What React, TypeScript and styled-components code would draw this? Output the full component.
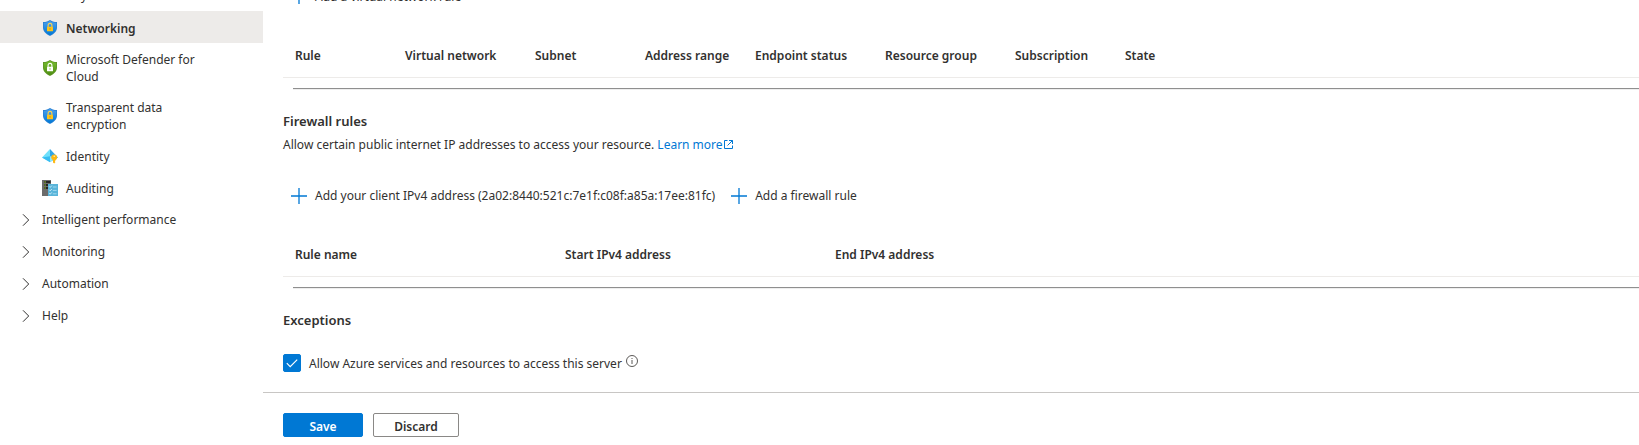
import React from 'react';
import styled, { createGlobalStyle } from 'styled-components';

const GlobalStyle = createGlobalStyle`
  *, *::before, *::after { box-sizing: border-box; }
  body {
    margin: 0;
    background: #fff;
    color: #323130;
    font-family: 'Segoe UI', 'Noto Sans', 'Open Sans', sans-serif;
    font-size: 12px;
    line-height: 17px;
    overflow: hidden;
  }
`;

/* ---------- layout ---------- */

const Page = styled.div`
  display: grid;
  grid-template-columns: 263px minmax(0, 1fr);
  min-height: 100vh;
  overflow: hidden;
`;

/* Both panes are scrolled down, so their first row is partly out of view. */
const Sidebar = styled.nav`
  margin-top: -21px;
`;

const Content = styled.div`
  margin-top: -21px;
`;

const Sections = styled.main`
  padding-left: 20px;
`;

/* ---------- sidebar ---------- */

const NavList = styled.ul`
  list-style: none;
  margin: 0;
  padding: 0;
`;

const NavLink = styled.a<{ $active?: boolean }>`
  display: flex;
  align-items: center;
  gap: 8px;
  min-height: 32px;
  padding: 8px 48px 6px 42px;
  color: inherit;
  text-decoration: none;
  font-weight: ${p => (p.$active ? 600 : 400)};
  background: ${p => (p.$active ? '#edebe9' : 'transparent')};

  svg { flex: none; }
`;

const GroupButton = styled.button`
  display: flex;
  align-items: center;
  gap: 10px;
  width: 100%;
  height: 32px;
  padding: 1px 20px 0;
  border: 0;
  background: none;
  color: inherit;
  font: inherit;
  text-align: left;
`;

/* ---------- sections ---------- */

const CommandBar = styled.div`
  display: flex;
  gap: 16px;
  height: 34px;
  padding-left: 8px;
`;

const Command = styled.button`
  display: flex;
  align-items: center;
  gap: 8px;
  padding: 0;
  border: 0;
  background: none;
  color: inherit;
  font: inherit;
  white-space: nowrap;
`;

const RulesTable = styled.table`
  width: 100%;
  margin-top: 23px;
  table-layout: fixed;
  border-collapse: collapse;
  border-bottom: 1px solid #edebe9;
`;

const HeaderCell = styled.th`
  height: 41px;
  padding: 0 0 2px 12px;
  text-align: left;
  font-weight: 600;
  white-space: nowrap;
`;

const Divider = styled.hr`
  height: 2px;
  margin: 10px 0 0 10px;
  border: solid #eeeeee;
  border-width: 1px 0;
  border-top-color: #8f8f8f;
`;

const Heading = styled.h2`
  margin: 21px 0 0;
  font-size: 13px;
  font-weight: 600;
  line-height: 20px;
`;

const Description = styled.p`
  margin: 4px 0 24px;
  line-height: 20px;
`;

const LearnMore = styled.a`
  color: #0078d4;
  text-decoration: none;

  svg { vertical-align: -1px; }
`;

const Option = styled.div`
  display: flex;
  align-items: center;
  margin-top: 23px;
`;

const OptionLabel = styled.label`
  display: flex;
  align-items: center;
  gap: 8px;
  height: 20px;
`;

const CheckBoxFrame = styled.span`
  display: grid;
  width: 18px;
  height: 18px;

  > * { grid-area: 1 / 1; }
  svg { pointer-events: none; }
`;

const CheckBox = styled.input`
  appearance: none;
  width: 18px;
  height: 18px;
  margin: 0;
  border: 1px solid #605e5c;
  border-radius: 2px;

  &:checked {
    border-color: #0078d4;
    background: #0078d4;
  }
`;

const InfoButton = styled.button`
  display: flex;
  margin: 0 0 4px 4px;
  padding: 0;
  border: 0;
  background: none;
`;

/* ---------- footer ---------- */

const Footer = styled.footer`
  display: flex;
  gap: 10px;
  margin-top: 19px;
  padding: 20px;
  border-top: 1px solid #c8c6c4;
`;

const Action = styled.button<{ $primary?: boolean }>`
  height: 24px;
  min-width: ${p => (p.$primary ? 80 : 86)}px;
  padding: 2px 16px 0;
  border: 1px solid ${p => (p.$primary ? '#0078d4' : '#8a8886')};
  border-radius: 2px;
  background: ${p => (p.$primary ? '#0078d4' : '#fff')};
  color: ${p => (p.$primary ? '#fff' : '#323130')};
  font: inherit;
  font-weight: 600;
`;

/* ---------- icons ---------- */

const SHIELD = 'M9 1C7.4 2.3 5 3 2 3.1V8.4C2 12.4 5.2 15 9 17C12.8 15 16 12.4 16 8.4V3.1C13 3 10.6 2.3 9 1Z';

function ShieldIcon({ id, tone }: { id: string; tone: 'blue' | 'green' }) {
  const blue = tone === 'blue';
  return (
    <svg width="16" height="16" viewBox="1 1 16 16" aria-hidden="true">
      <defs>
        <linearGradient id={id} x1="0" y1="0" x2="0" y2="1">
          <stop offset="0" stopColor={blue ? '#4aa0f0' : '#76bc2d'} />
          <stop offset="1" stopColor={blue ? '#0078d4' : '#4f8d15'} />
        </linearGradient>
      </defs>
      <path d={SHIELD} fill={blue ? '#2b82d4' : '#5e9624'} />
      <path d="M9 2C7.4 3.2 5.3 3.8 2.8 4V8.4C2.8 11.9 5.6 14.3 9 16.1C12.4 14.3 15.2 11.9 15.2 8.4V4C12.7 3.8 10.6 3.2 9 2Z" fill={`url(#${id})`} />
      <path d="M7.1 8.5V6.4A1.9 2 0 0 1 10.9 6.4V8.5" fill="none" stroke={blue ? '#ffd34d' : '#fff'} strokeWidth="1.1" />
      <rect x="6" y="7.8" width="6" height="4.4" rx=".5" fill={blue ? '#fcc41c' : '#fff'} />
      <circle cx="9" cy="9.9" r=".7" fill={blue ? '#c98a00' : '#76bc2d'} />
    </svg>
  );
}

function IdentityIcon() {
  return (
    <svg width="16" height="16" viewBox="0 0 16 16" aria-hidden="true">
      <path d="M8 1L0 9.5L8 14Z" fill="#6fe0fb" />
      <path d="M8 1L16 9.5L8 14Z" fill="#2fa5e8" />
      <path d="M0 9.5L8 8.2V14.2Z" fill="#38bdf2" />
      <path d="M8 8.2L15 9.5L8 14.2Z" fill="#8fe6fb" />
      <circle cx="12.2" cy="9.3" r="2.9" fill="#fdb813" />
      <path d="M11 11H13.4V13L12.8 13.6L13.4 14.3L12.2 15.6L11 14.6Z" fill="#fdb813" />
      <circle cx="12.2" cy="8.3" r=".7" fill="#fff3c4" />
    </svg>
  );
}

function AuditIcon() {
  return (
    <svg width="16" height="16" viewBox="0 0 16 16" aria-hidden="true">
      <path d="M0 0H9V16H0Z" fill="#6b6b6b" />
      <path d="M2 1H8.5V3H2ZM2 4H8.5V6H2ZM2 7H7V9H2Z" fill="#262626" />
      <path d="M2.4 1.5H3.8V2.6H2.4ZM2.4 4.5H3.8V5.6H2.4ZM2.4 7.5H3.8V8.6H2.4Z" fill="#b4ec36" />
      <path d="M6 4H16V16H6Z" fill="#59b4d9" />
      <path d="M7.2 6.4L8.2 7.4L9.8 5.6M7.2 9.8L8.2 10.8L9.8 9M7.2 13.2L8.2 14.2L9.8 12.4" fill="none" stroke="#d8f1fb" strokeWidth=".9" />
      <path d="M10.8 7H14.6M10.8 10.4H14.6M10.8 13.8H14.6" stroke="#a9dcf0" strokeWidth=".9" />
    </svg>
  );
}

function Chevron({ open }: { open?: boolean }) {
  return (
    <svg width="12" height="12" viewBox="0 0 12 12" aria-hidden="true">
      <path d={open ? 'M.5 3L6 8.5L11.5 3' : 'M3 .3L8.7 6L3 11.7'} fill="none" stroke="#323130" strokeWidth="1" />
    </svg>
  );
}

function PlusIcon() {
  return (
    <svg width="16" height="16" viewBox="0 0 16 16" aria-hidden="true">
      <path d="M8 0V16M0 8H16" stroke="#0078d4" strokeWidth="1.3" />
    </svg>
  );
}

function ExternalIcon() {
  return (
    <svg width="11" height="11" viewBox="0 0 11 11" aria-hidden="true">
      <path d="M4.5 1.5H1.5V9.5H9.5V6.5M6 1.5H9.5V5M9.5 1.5L4.5 6.5" fill="none" stroke="#0078d4" />
    </svg>
  );
}

function CheckIcon() {
  return (
    <svg width="18" height="18" viewBox="0 0 18 18" aria-hidden="true">
      <path d="M3.8 9.2L7.2 12.6L14.2 5.6" fill="none" stroke="#fff" strokeWidth="1.2" />
    </svg>
  );
}

function InfoIcon() {
  return (
    <svg width="12" height="12" viewBox="0 0 12 12" aria-hidden="true">
      <circle cx="6" cy="6" r="5.5" fill="none" stroke="#484644" strokeWidth=".9" />
      <path d="M6 5V9M6 3V4" stroke="#484644" strokeWidth=".9" />
    </svg>
  );
}

/* ---------- parts ---------- */

const vnetColumns: [string, number?][] = [
  ['Rule', 110],
  ['Virtual network', 130],
  ['Subnet', 110],
  ['Address range', 110],
  ['Endpoint status', 130],
  ['Resource group', 130],
  ['Subscription', 110],
  ['State'],
];

const firewallColumns: [string, number?][] = [
  ['Rule name', 270],
  ['Start IPv4 address', 270],
  ['End IPv4 address'],
];

function Rules({ label, columns }: { label: string; columns: [string, number?][] }) {
  return (
    <>
      <RulesTable aria-label={label}>
        <colgroup>
          {columns.map(([name, width]) => (
            <col key={name} width={width} />
          ))}
        </colgroup>
        <thead>
          <tr>
            {columns.map(([name]) => (
              <HeaderCell key={name} scope="col">{name}</HeaderCell>
            ))}
          </tr>
        </thead>
      </RulesTable>
      <Divider />
    </>
  );
}

const securityItems = [
  { label: 'Networking', icon: <ShieldIcon id="networking" tone="blue" />, active: true },
  { label: 'Microsoft Defender for Cloud', icon: <ShieldIcon id="defender" tone="green" /> },
  { label: 'Transparent data encryption', icon: <ShieldIcon id="encryption" tone="blue" /> },
  { label: 'Identity', icon: <IdentityIcon /> },
  { label: 'Auditing', icon: <AuditIcon /> },
];

const groups = ['Intelligent performance', 'Monitoring', 'Automation', 'Help'];

export default function App() {
  return (
    <>
      <GlobalStyle />
      <Page>
        <Sidebar aria-label="Resource menu">
          <GroupButton type="button" aria-expanded="true">
            <Chevron open />
            Security
          </GroupButton>
          <NavList>
            {securityItems.map(item => (
              <li key={item.label}>
                <NavLink href="#" $active={item.active} aria-current={item.active ? 'page' : undefined}>
                  {item.icon}
                  {item.label}
                </NavLink>
              </li>
            ))}
          </NavList>
          {groups.map(group => (
            <GroupButton key={group} type="button" aria-expanded="false">
              <Chevron />
              {group}
            </GroupButton>
          ))}
        </Sidebar>

        <Content>
          <Sections>
            <CommandBar>
              <Command type="button">
                <PlusIcon />
                Add a virtual network rule
              </Command>
            </CommandBar>
            <Rules label="Virtual network rules" columns={vnetColumns} />

            <Heading>Firewall rules</Heading>
            <Description>
              Allow certain public internet IP addresses to access your resource.{' '}
              <LearnMore href="#">Learn more<ExternalIcon /></LearnMore>
            </Description>
            <CommandBar>
              <Command type="button">
                <PlusIcon />
                Add your client IPv4 address (2a02:8440:521c:7e1f:c08f:a85a:17ee:81fc)
              </Command>
              <Command type="button">
                <PlusIcon />
                Add a firewall rule
              </Command>
            </CommandBar>
            <Rules label="Firewall rules" columns={firewallColumns} />

            <Heading>Exceptions</Heading>
            <Option>
              <OptionLabel>
                <CheckBoxFrame>
                  <CheckBox type="checkbox" defaultChecked />
                  <CheckIcon />
                </CheckBoxFrame>
                Allow Azure services and resources to access this server
              </OptionLabel>
              <InfoButton type="button" aria-label="More information">
                <InfoIcon />
              </InfoButton>
            </Option>
          </Sections>
          <Footer>
            <Action type="button" $primary>Save</Action>
            <Action type="button">Discard</Action>
          </Footer>
        </Content>
      </Page>
    </>
  );
}
